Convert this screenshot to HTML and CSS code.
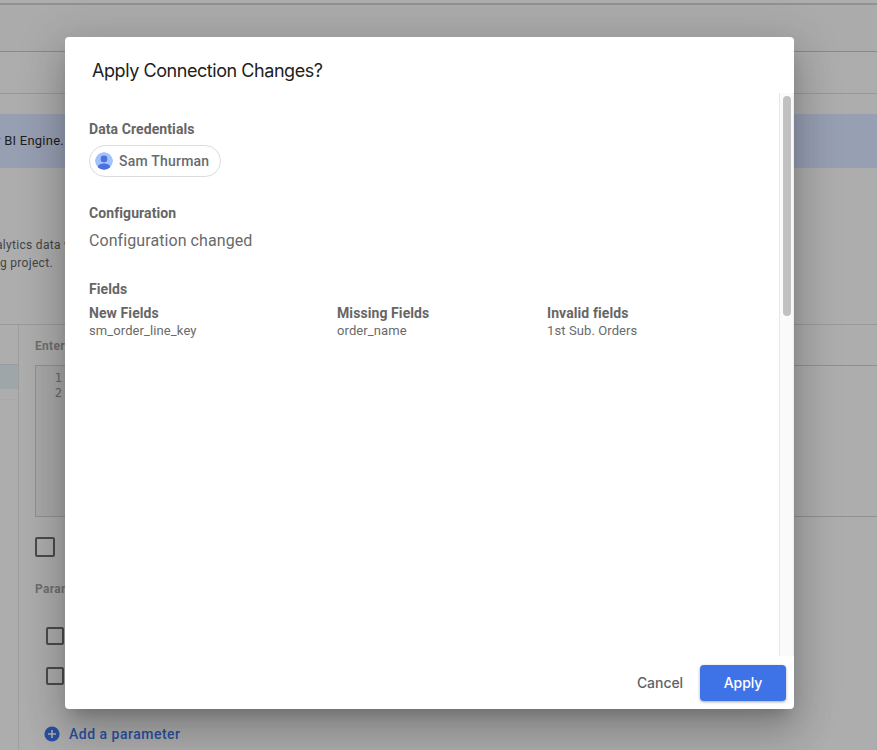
FILE: index.html
```html
<!DOCTYPE html>
<html lang="en">
<head>
<meta charset="utf-8">
<title>Apply Connection Changes?</title>
<link rel="stylesheet" href="styles.css">
</head>
<body>
<div class="page" aria-hidden="true">
  <div class="topbar"></div>
  <div class="toolbar"></div>
  <div class="subbar"></div>
  <div class="notice"><span>r BI Engine.</span></div>
  <div class="intro"><p><span class="line1">alytics data w</span><br><span class="line2">g project.</span></p></div>
  <div class="workspace">
    <div class="side"><div class="side-head"></div><div class="side-selected"></div><div class="side-rest"></div></div>
    <div class="main">
      <h4 class="label">Enter</h4>
      <div class="editor"><div class="gutter"><span>1</span><span>2</span></div></div>
      <i class="box large"></i>
      <h4 class="label params">Param</h4>
      <i class="box"></i>
      <i class="box second"></i>
      <div class="add">
        <svg width="16" height="16" viewBox="0 0 16 16"><circle cx="8" cy="8" r="7.6" fill="#2a4f9f"/><path d="M8 4v8M4 8h8" stroke="#adadad" stroke-width="1.6"/></svg>
        <span>Add a parameter</span>
      </div>
    </div>
  </div>
</div>
<div class="dialog" role="dialog">
  <header><h2>Apply Connection Changes?</h2></header>
  <div class="body">
    <div class="content">
      <h3>Data Credentials</h3>
      <div class="chip">
        <svg width="18" height="18" viewBox="0 0 18 18"><defs><clipPath id="disc"><circle cx="9" cy="9" r="9"/></clipPath></defs><g clip-path="url(#disc)"><circle cx="9" cy="9" r="9" fill="#a1c2fa"/><circle cx="9" cy="6.9" r="3.3" fill="#4f70dc"/><ellipse cx="9" cy="14.6" rx="6.1" ry="3.1" fill="#4f70dc"/></g></svg>
        <span>Sam Thurman</span>
      </div>
      <h3 class="config">Configuration</h3>
      <p class="changed">Configuration changed</p>
      <h3 class="fields">Fields</h3>
      <div class="columns">
        <div><h3>New Fields</h3><p>sm_order_line_key</p></div>
        <div><h3>Missing Fields</h3><p>order_name</p></div>
        <div><h3>Invalid fields</h3><p>1st Sub. Orders</p></div>
      </div>
    </div>
    <div class="track"><div class="thumb"></div></div>
  </div>
  <footer><button class="cancel">Cancel</button><button class="apply">Apply</button></footer>
</div>
</body>
</html>
```
FILE: styles.css
```css
* { box-sizing: border-box; }
body { margin: 0; width: 877px; height: 750px; overflow: hidden; position: relative; font-family: Roboto, "Liberation Sans", sans-serif; background: #adadad; }
h2, h3, h4, p { margin: 0; }
svg { display: block; }
.page { height: 750px; overflow: hidden; }
.topbar { height: 5px; border-bottom: 2px solid #919191; }
.toolbar { height: 47px; background: #ababab; border-bottom: 1px solid #898989; }
.subbar { height: 42px; border-bottom: 1px solid #989898; }
.notice { height: 54px; margin-top: 20px; background: #979fb3; display: flex; align-items: center; }
.notice span { margin-left: -4px; font-size: 13px; line-height: 20px; letter-spacing: .25px; color: #1d1e20; white-space: nowrap; }
.intro { height: 156px; padding-top: 68px; color: #434446; font-size: 12px; line-height: 18px; letter-spacing: .3px; white-space: nowrap; }
.line1 { margin-left: -4px; letter-spacing: .3px; }
.workspace { display: flex; height: 426px; border-top: 1px solid #999; }
.side { width: 19px; border-right: 1px solid #9e9e9e; }
.side-head { height: 39px; }
.side-selected { height: 25px; background: #9fa6aa; border-top: 1px solid #979ea2; }
.side-rest { height: 11px; border-bottom: 1px solid #a8a8a8; }
.main { flex: 1; min-width: 0; padding: 13px 0 0 16px; display: flex; flex-direction: column; align-items: flex-start; }
.label { font-size: 12px; line-height: 16px; font-weight: 700; color: #707070; letter-spacing: .3px; }
.editor { align-self: stretch; height: 152px; margin-top: 11px; border: 1px solid #909090; border-right: 0; }
.gutter { width: 30px; height: 100%; padding-top: 5px; background: #a8a8a8; display: flex; flex-direction: column; align-items: flex-end; font: 12px/15px "DejaVu Sans Mono", monospace; color: #666; padding-right: 4px; }
.box { width: 18px; height: 18px; margin: 30px 0 0 11px; border: 2px solid #4b4b4b; border-radius: 2px; flex: none; }
.box.large { width: 20px; height: 20px; margin: 20px 0 0; }
.params { margin-top: 24px; }
.box.second { margin-top: 22px; }
.add { display: flex; align-items: center; gap: 9px; margin: 39px 0 0 9px; height: 20px; color: #2a4f9f; font-size: 14px; font-weight: 500; letter-spacing: .5px; white-space: nowrap; }
.dialog { position: absolute; left: 65px; top: 37px; width: 729px; height: 672px; display: flex; flex-direction: column; background: #fff; border-radius: 4px; overflow: hidden; box-shadow: 0 11px 15px -7px rgba(0,0,0,.2), 0 24px 38px 3px rgba(0,0,0,.14), 0 9px 46px 8px rgba(0,0,0,.12); }
header { height: 56px; padding: 22px 27px 0; }
h2 { font: 400 18px/24px Inter, sans-serif; letter-spacing: -.44px; color: #212121; white-space: nowrap; }
.body { height: 563px; display: flex; }
.content { flex: 1; padding: 26px 0 0 24px; color: #6a6a6a; }
h3 { font-size: 14px; line-height: 20px; font-weight: 700; letter-spacing: .09px; color: #666; white-space: nowrap; }
.chip { display: flex; align-items: center; gap: 6px; width: 132px; height: 32px; margin-top: 6px; padding-left: 5px; border: 1px solid #dadce0; border-radius: 16px; font-size: 14px; font-weight: 500; letter-spacing: .22px; color: #676b70; white-space: nowrap; }
.config { margin-top: 26px; }
.changed { margin-top: 6px; font-size: 16px; line-height: 24px; letter-spacing: .08px; }
.fields { margin-top: 26px; }
.columns { display: grid; grid-template-columns: 248px 210px 1fr; margin-top: 4px; }
.columns p { font-size: 13px; line-height: 16px; letter-spacing: .1px; white-space: nowrap; }
.track { width: 15px; padding: 3px 2px 0 3px; background: #fafafa; border-left: 1px solid #e7e7e7; border-right: 1px solid #ededed; }
.thumb { width: 8px; height: 220px; border-radius: 4px; background: #c1c1c1; }
footer { height: 53px; display: flex; justify-content: flex-end; padding: 9px 8px; gap: 5px; }
button { border: 0; padding: 0; height: 36px; font: 500 14px/36px Inter, sans-serif; letter-spacing: -.05px; background: none; color: #5f6368; border-radius: 4px; }
.cancel { width: 70px; }
.apply { width: 86px; color: #fff; background: #3e73e8; box-shadow: 0 1px 3px rgba(0,0,0,.35); }
```
